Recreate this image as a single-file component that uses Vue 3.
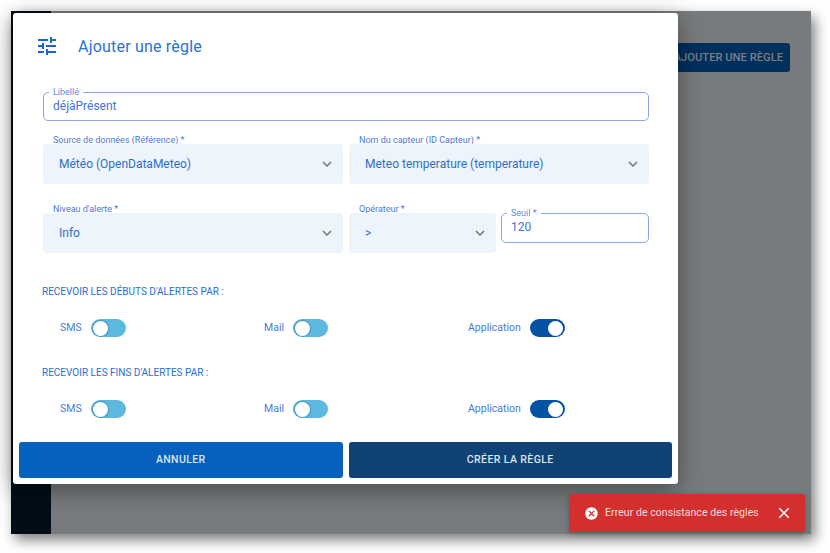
<script setup>
const sections = [
  { title: "Recevoir les débuts d'alertes par :", first: true },
  { title: "Recevoir les fins d'alertes par :", first: false },
]
const channels = [
  { name: 'SMS', on: false },
  { name: 'Mail', on: false },
  { name: 'Application', on: true },
]
</script>

<template>
  <div class="page">
    <div class="window">
      <aside class="sidebar"></aside>
      <main class="main">
        <button class="add-btn">Ajouter une règle</button>
      </main>

      <section class="dialog">
        <header class="dialog-head">
          <svg class="head-icon" viewBox="0 0 24 24" width="24" height="24">
            <path d="M3 17v2h6v-2H3zM3 5v2h10V5H3zm10 16v-2h8v-2h-8v-2h-2v6h2zM7 9v2H3v2h4v2h2V9H7zm14 4v-2H11v2h10zm-6-4h2V7h4V5h-4V3h-2v6z" fill="#1a66d2" />
          </svg>
          <h1>Ajouter une règle</h1>
        </header>

        <div class="form">
          <label class="outlined libelle">
            <span class="legend">Libellé</span>
            <span class="value">déjàPrésent</span>
          </label>

          <div class="row two">
            <div class="field">
              <span class="field-label">Source de données (Référence) *</span>
              <div class="select"><span>Météo (OpenDataMeteo)</span><svg viewBox="0 0 24 24" width="18" height="18"><path d="M7.41 8.59 12 13.17l4.59-4.58L18 10l-6 6-6-6z" fill="#6f7680" /></svg></div>
            </div>
            <div class="field">
              <span class="field-label">Nom du capteur (ID Capteur) *</span>
              <div class="select"><span>Meteo temperature (temperature)</span><svg viewBox="0 0 24 24" width="18" height="18"><path d="M7.41 8.59 12 13.17l4.59-4.58L18 10l-6 6-6-6z" fill="#6f7680" /></svg></div>
            </div>
          </div>

          <div class="row three">
            <div class="field">
              <span class="field-label">Niveau d'alerte *</span>
              <div class="select"><span>Info</span><svg viewBox="0 0 24 24" width="18" height="18"><path d="M7.41 8.59 12 13.17l4.59-4.58L18 10l-6 6-6-6z" fill="#6f7680" /></svg></div>
            </div>
            <div class="field">
              <span class="field-label">Opérateur *</span>
              <div class="select"><span>&gt;</span><svg viewBox="0 0 24 24" width="18" height="18"><path d="M7.41 8.59 12 13.17l4.59-4.58L18 10l-6 6-6-6z" fill="#6f7680" /></svg></div>
            </div>
            <label class="outlined seuil">
              <span class="legend">Seuil *</span>
              <span class="value">120</span>
            </label>
          </div>

          <div v-for="s in sections" :key="s.title" class="section" :class="{ first: s.first }">
            <h2>{{ s.title }}</h2>
            <div class="toggles">
              <div v-for="c in channels" :key="c.name" class="toggle-cell">
                <span>{{ c.name }}</span>
                <span class="switch" :class="{ on: c.on }"><i></i></span>
              </div>
            </div>
          </div>
        </div>

        <footer class="actions">
          <button class="cancel">Annuler</button>
          <button class="create">Créer la règle</button>
        </footer>
      </section>

      <div class="toast">
        <svg viewBox="0 0 24 24" width="15" height="15"><path d="M12 2C6.47 2 2 6.47 2 12s4.47 10 10 10 10-4.47 10-10S17.53 2 12 2zm5 13.59L15.59 17 12 13.41 8.41 17 7 15.59 10.59 12 7 8.41 8.41 7 12 10.59 15.59 7 17 8.41 13.41 12 17 15.59z" fill="#fff" /></svg>
        <span class="toast-text">Erreur de consistance des règles</span>
        <svg class="toast-close" viewBox="0 0 24 24" width="18" height="18"><path d="M19 6.41 17.59 5 12 10.59 6.41 5 5 6.41 10.59 12 5 17.59 6.41 19 12 13.41 17.59 19 19 17.59 13.41 12z" fill="#fff" /></svg>
      </div>
    </div>
  </div>
</template>

<style>
html, body { margin: 0; background: #fff; }
</style>

<style scoped>
* { box-sizing: border-box; }
.page { width: 830px; height: 553px; padding: 11px 0 0 11px; background: #fff; overflow: hidden; }
.window {
  position: relative;
  display: flex;
  width: 800px;
  height: 523px;
  background: #787b7d;
  box-shadow: 4px 6px 12px rgba(0, 0, 0, 0.5);
  font-family: Roboto, sans-serif;
}
.sidebar { width: 40px; background: #020d18; flex: none; }
.main { flex: 1; display: flex; justify-content: flex-end; align-items: flex-start; padding: 32px 21px 0 0; }
.add-btn {
  width: 130px;
  height: 29px;
  border: 0;
  border-radius: 3px;
  background: #012f5e;
  color: #7b7f84;
  font: 500 11.2px Roboto, sans-serif;
  text-transform: uppercase;
  text-align: right;
  padding: 0 7px 1px 0;
}
.dialog {
  position: absolute;
  left: 2px;
  top: 2px;
  width: 665px;
  height: 471px;
  background: #fff;
  border-radius: 3px;
  box-shadow: 0 6px 24px rgba(0, 0, 0, 0.4);
  display: flex;
  flex-direction: column;
  color: #1a66d2;
}
.dialog-head { display: flex; align-items: center; gap: 19px; height: 66px; padding: 0 0 0 22px; }
.head-icon { flex: none; }
h1 { margin: 0; font-size: 16px; font-weight: 400; color: #2a72d6; letter-spacing: 0.2px; }
.form { padding: 13px 29px 0 30px; flex: 1; }
.outlined { display: block; position: relative; border: 1px solid #8ba6e6; border-radius: 5px; background: #fff; }
.libelle { height: 29px; padding: 6px 0 0 9px; }
.seuil { height: 30px; width: 148px; padding: 6px 0 0 9px; flex: none; }
.legend {
  position: absolute;
  top: -6px;
  left: 5px;
  padding: 0 4px;
  background: #fff;
  font-size: 9px;
  line-height: 10px;
  color: #5f8ae0;
}
.value { font-size: 12px; line-height: 15px; color: #3f74d8; display: block; }
.row { display: flex; gap: 6px; }
.row.two { margin-top: 15px; }
.row.three { margin-top: 21px; }
.row.two .field { width: 300px; }
.row.three .field:nth-child(1) { width: 300px; }
.row.three .field:nth-child(2) { width: 147px; }
.row.three .seuil { margin: 8px 0 0 -1px; }
.field { display: flex; flex-direction: column; }
.field-label { font-size: 9px; line-height: 8px; padding-left: 10px; color: #4a7ad8; height: 8px; white-space: nowrap; }
.select {
  height: 40px;
  background: #edf4fb;
  border-radius: 4px;
  display: flex;
  align-items: center;
  justify-content: space-between;
  padding: 0 7px 0 16px;
  font-size: 12px;
  color: #2f6fc8;
}
.section h2 {
  margin: 0 0 0 -1px;
  font-size: 10px;
  line-height: 11px;
  font-weight: 400;
  text-transform: uppercase;
  color: #2a6ed0;
}
.section { margin-top: 30px; }
.section.first { margin-top: 33px; }
.toggles { display: grid; grid-template-columns: 204px 204px 1fr; margin-top: 22px; padding-left: 17px; }
.toggle-cell { display: flex; align-items: center; gap: 9px; font-size: 10.5px; line-height: 18px; color: #4a7ad8; }
.switch { width: 35px; height: 18px; border-radius: 9px; background: #5cb8df; position: relative; display: block; }
.switch i { position: absolute; top: 1.5px; left: 2px; width: 15px; height: 15px; border-radius: 50%; background: #fff; box-shadow: 0 0 0 1px rgba(20, 90, 150, 0.35); }
.switch.on { background: #0453a3; }
.switch.on i { left: 18px; box-shadow: none; }
.actions { display: flex; gap: 6px; padding: 0 6px 6px; }
.actions button {
  flex: 1;
  height: 36px;
  border: 0;
  border-radius: 3px;
  color: #dce4ee;
  font: 500 10.5px Roboto, sans-serif;
  letter-spacing: 0.4px;
  text-transform: uppercase;
  padding: 0 0 2px;
}
.cancel { background: #0561bc; }
.create { background: #104275; }
.toast {
  position: absolute;
  left: 558px;
  top: 483px;
  width: 236px;
  height: 38px;
  border-radius: 3px;
  background: #d32f2f;
  display: flex;
  align-items: center;
  padding-left: 15px;
  color: #f6dcdc;
  font-size: 10.5px;
  letter-spacing: 0.06px;
  box-shadow: 0 2px 6px rgba(0, 0, 0, 0.25);
}
.toast-text { margin-left: 6px; padding-bottom: 2px; }
.toast-close { margin-left: auto; margin-right: 12px; }
</style>
